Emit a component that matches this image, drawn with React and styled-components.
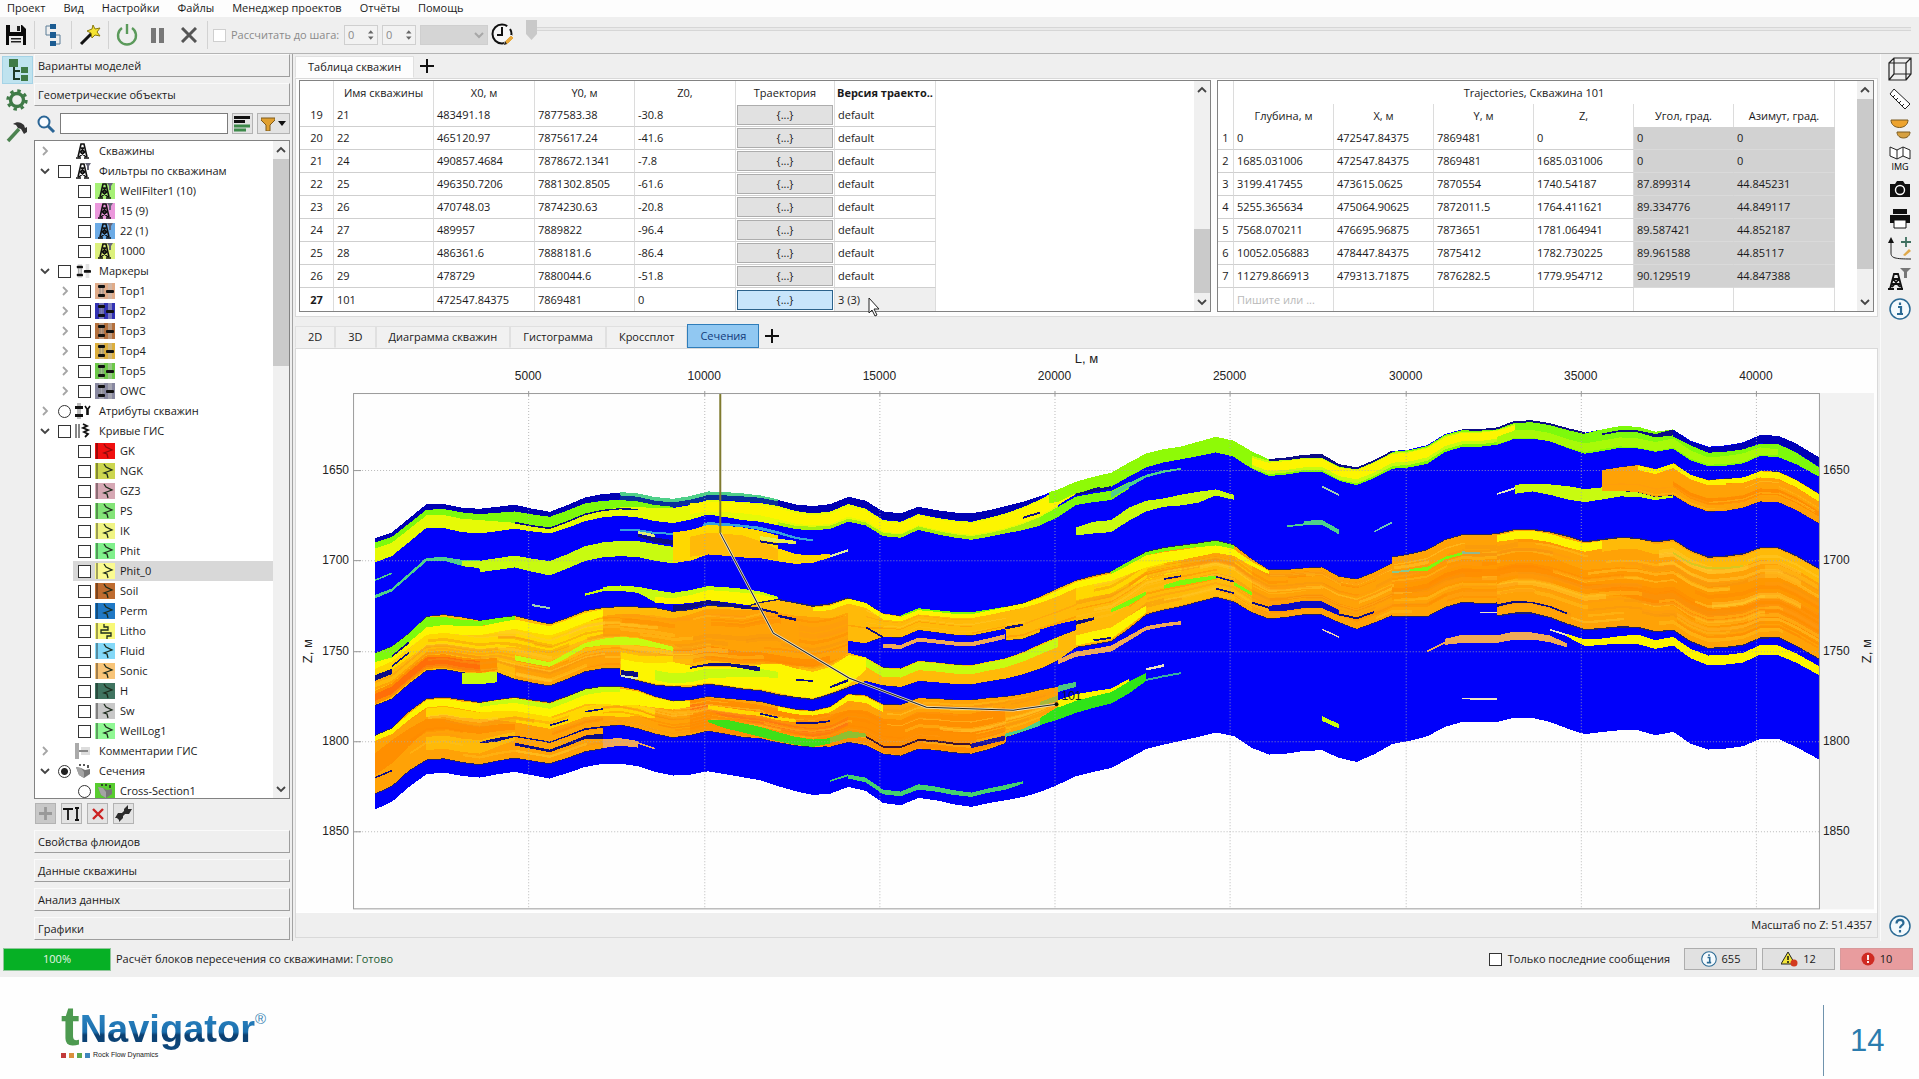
import React from 'react';
import styled, { createGlobalStyle } from 'styled-components';

const GlobalStyle = createGlobalStyle`
  *, *::before, *::after {
    box-sizing: border-box;
  }

  body {
    margin: 0;
    background: #fefefe;
    color: #1a1a1a;
    font-family: 'Open Sans', 'Noto Sans', sans-serif;
    font-size: 11px;
    line-height: 16px;
  }

  button, input, select {
    font: inherit;
    color: inherit;
    margin: 0;
    padding: 0;
  }
`;

const MenuBar = styled.nav`
  display: flex;
  gap: 18px;
  height: 17px;
  padding: 0 7px;
  background: #fdfdfd;

  a {
    color: #1a1a1a;
    text-decoration: none;
  }
`;

const Toolbar = styled.div`
  display: flex;
  align-items: center;
  height: 37px;
  padding-left: 3px;
  background: #efefef;
  border-bottom: 1px solid #b4b4b4;
`;

const ToolButton = styled.button`
  display: flex;
  flex: none;
  align-items: center;
  justify-content: center;
  width: ${(p) => (p.$wide ? 36 : 26)}px;
  height: 28px;
  border: 0;
  background: transparent;
`;

const Separator = styled.span`
  width: 1px;
  height: 28px;
  margin: 0 5px;
  background: #d2d2d2;
`;

const Check = styled.input`
  appearance: none;
  flex: none;
  width: 13px;
  height: 13px;
  border: 1px solid ${(p) => (p.disabled ? '#cfcfcf' : '#333')};
  border-radius: ${(p) => (p.type === 'radio' ? '50%' : '0')};
  background: #fff;

  &[type='radio']:checked {
    background: radial-gradient(circle, #222 0 3px, #fff 4px);
  }
`;

const StepLabel = styled.label`
  display: flex;
  flex: none;
  align-items: center;
  gap: 5px;
  width: 131px;
  color: #8a8a8a;
  white-space: nowrap;
`;

const Spin = styled.span`
  display: flex;
  flex: none;
  align-items: center;
  width: 34px;
  height: 20px;
  margin-right: 4px;
  padding: 0 3px;
  border: 1px solid #cfcfcf;
  background: #f2f2f2;

  input {
    width: 100%;
    min-width: 0;
    border: 0;
    background: transparent;
    color: #8a8a8a;
  }
`;

const Combo = styled.select`
  flex: none;
  width: 68px;
  height: 20px;
  margin-right: 2px;
  border: 1px solid #c2c2c2;
  background: #cbcbcb;
  color: #8a8a8a;
`;

const StepSlider = styled.input`
  appearance: none;
  flex: 1;
  height: 20px;
  margin: 0 8px 10px 10px;
  background: linear-gradient(#d6d6d6 1px, #e9e9e9 1px 3px, #d6d6d6 3px) 0 7px / 100% 4px no-repeat;

  &::-webkit-slider-thumb {
    appearance: none;
    width: 11px;
    height: 20px;
    background: #c9c9c9;
    clip-path: polygon(0 0, 100% 0, 100% 70%, 50% 100%, 0 70%);
  }
`;

const Workspace = styled.div`
  display: grid;
  grid-template-columns: 34px 256px minmax(0, 1fr) 39px;
  background: #efefef;
`;

const ModeStrip = styled.div`
  display: flex;
  flex-direction: column;
  align-items: center;
  padding-top: 2px;
`;

const ModeButton = styled.button`
  display: flex;
  align-items: center;
  justify-content: center;
  width: 31px;
  height: ${(p) => (p.$active ? '28px' : '32px')};
  border: 1px solid ${(p) => (p.$active ? '#a5d3e6' : 'transparent')};
  background: ${(p) => (p.$active ? '#bfe3ef' : 'transparent')};
`;

const Sidebar = styled.aside`
  display: flex;
  flex-direction: column;
`;

const SectionButton = styled.button`
  flex: none;
  height: 23px;
  margin-bottom: 6px;
  padding: 0 3px;
  border: 1px solid #fafafa;
  border-right-color: #9d9d9d;
  border-bottom-color: #9d9d9d;
  background: #efefef;
  text-align: left;

  &:last-child {
    margin-bottom: 1px;
  }
`;

const SearchRow = styled.div`
  display: flex;
  align-items: center;
  gap: 4px;
  height: 23px;
  margin-bottom: 5px;
  padding-left: 2px;

  input {
    flex: 1;
    min-width: 0;
    height: 21px;
    border: 1px solid #7c7c7c;
    background: #fff;
  }
`;

const SquareButton = styled.button`
  display: flex;
  align-items: center;
  justify-content: center;
  gap: 3px;
  width: ${(p) => p.$width || 21}px;
  height: 21px;
  border: 1px solid #b3b3b3;
  background: ${(p) => (p.disabled ? '#c8c8c8' : '#e3e3e3')};
`;

const TreeBox = styled.div`
  display: flex;
  flex: 1 1 0;
  min-height: 0;
  overflow: hidden;
  border: 1px solid #828282;
  background: #fff;
`;

const TreeList = styled.ul`
  flex: 1;
  margin: 0;
  padding: 0;
  list-style: none;
`;

const TreeRow = styled.li`
  display: flex;
  align-items: center;
  height: 20px;
  padding-left: ${(p) => (p.$level ? 22 : 2)}px;
  white-space: nowrap;

  label {
    display: flex;
    flex: 1;
    align-items: center;
    height: 20px;
    padding-left: 5px;
    gap: 4px;
    background: ${(p) => (p.$selected ? '#d8d8d8' : 'transparent')};
  }

  label > svg {
    flex: none;
    margin-right: ${(p) => (p.$level ? 1 : 4)}px;
  }
`;

const Chevron = styled.span`
  display: flex;
  justify-content: center;
  width: 16px;
`;

const CheckSpace = styled.span`
  width: 13px;
`;

const ScrollTrack = styled.div`
  display: flex;
  flex: none;
  flex-direction: column;
  align-items: center;
  justify-content: space-between;
  width: 16px;
  padding: 4px 0;
  background: #f0f0f0;
`;

const ScrollThumb = styled.span`
  width: 16px;
  height: ${(p) => p.$size}px;
  margin-top: ${(p) => (p.$end ? 'auto' : '4px')};
  margin-bottom: ${(p) => (p.$end ? '4px' : 'auto')};
  background: #cacaca;
`;

const TreeActions = styled.div`
  display: flex;
  gap: 5px;
  padding: 4px 1px 6px;
`;

const Main = styled.main`
  min-width: 0;
  margin-left: 2px;
  padding: 0 2px;
  border-left: 1px solid #a3a3a3;
`;

const TabBar = styled.div`
  display: flex;
  align-items: flex-end;
  height: 24px;
`;

const AddTab = styled.button`
  display: flex;
  align-items: center;
  justify-content: center;
  width: 26px;
  height: 24px;
  border: 0;
  background: transparent;
`;

const Tab = styled.button`
  height: ${(p) => (p.$accent ? 24 : 22)}px;
  padding: 0 12px;
  border: 1px solid ${(p) => (p.$accent ? '#2f7dba' : '#e0e0e0')};
  border-bottom-color: ${(p) => (p.$accent ? '#2f7dba' : 'transparent')};
  background: ${(p) => (p.$accent ? '#91c8f2' : p.$open ? '#fdfdfd' : '#f1f1f1')};
  color: ${(p) => (p.$accent ? '#123a7a' : '#1a1a1a')};
`;

const TablesPanel = styled.section`
  display: flex;
  gap: 6px;
  margin-bottom: 7px;
  padding: 1px 3px 4px;
  border: 1px solid #d9d9d9;
  background: #fdfdfd;
`;

const TableFrame = styled.div`
  display: flex;
  flex: ${(p) => (p.$grow ? '1 1 0' : '0 0 auto')};
  justify-content: space-between;
  gap: ${(p) => (p.$grow ? 0 : 22)}px;
  min-width: 0;
  border: 1px solid #828282;
  background: #fff;
`;

const DataTable = styled.table`
  flex: none;
  width: ${(p) => p.$width}px;
  table-layout: fixed;
  border-spacing: 0;

  th, td {
    height: 23px;
    padding: 0 3px;
    border-right: 1px solid #dcdcdc;
    text-align: left;
    white-space: nowrap;
    font-weight: 400;
  }

  thead th {
    padding: 0;
    text-align: center;
  }

  tbody th {
    padding: 0;
    text-align: center;
  }

  tbody th, tbody td {
    border-bottom: 1px solid #cfcfcf;
  }

  tbody tr:last-child > * {
    border-bottom: 0;
  }
`;

const ClippedHead = styled.div`
  display: flex;
  justify-content: center;
  overflow: hidden;
  font-weight: 700;
`;

const ReadOnlyCell = styled.td`
  && {
    background: #d2d2d2;
    border-color: #d2d2d2;
    border-bottom-color: #dadada;
  }
`;

const HintCell = styled.td`
  color: #b9b9b9;
`;

const ButtonCell = styled.td`
  && {
    padding: 1px;
  }
`;

const CellButton = styled.button`
  display: block;
  width: 100%;
  height: 20px;
  border: 1px solid ${(p) => (p.$active ? '#2c628b' : '#adadad')};
  background: ${(p) => (p.$active ? '#c8e5fb' : '#e1e1e1')};
`;

const CurrentCell = styled.td`
  position: relative;
  background: #efefef;
`;

const Pointer = styled.svg`
  position: absolute;
  left: 33px;
  top: 9px;
`;

const ChartPanel = styled.section`
  margin-bottom: 3px;
  border: 1px solid #d9d9d9;
  background: #fefefe;

  svg {
    display: block;
    width: 100%;
    height: auto;
  }
`;

const ScaleLine = styled.p`
  margin: 0;
  padding: 4px 5px;
  border-top: 1px solid #fff;
  background: #efefef;
  text-align: right;
`;

const ViewStrip = styled.div`
  display: flex;
  flex-direction: column;
  align-items: center;
  border-left: 1px solid #fafafa;
`;

const ViewButton = styled.button`
  display: flex;
  align-items: center;
  justify-content: center;
  width: 30px;
  height: 30px;
  border: 0;
  background: transparent;

  &:last-child {
    margin-top: auto;
  }
`;

const StatusBar = styled.div`
  display: flex;
  align-items: center;
  gap: 5px;
  height: 36px;
  padding: 0 6px 0 3px;
  background: #efefef;
`;

const Progress = styled.span`
  width: 108px;
  height: 23px;
  border: 1px solid #8fc79a;
  background: #06b025;
  color: #e6f6e8;
  line-height: 20px;
  text-align: center;
`;

const StatusText = styled.span`
  margin-right: auto;

  b {
    color: #1d5c33;
    font-weight: 400;
  }
`;

const LastOnly = styled.label`
  display: flex;
  align-items: center;
  gap: 6px;
  margin-right: 9px;
`;

const CountButton = styled.button`
  display: flex;
  align-items: center;
  justify-content: center;
  gap: 5px;
  width: 73px;
  height: 22px;
  border: 1px solid ${(p) => (p.$alert ? '#d89a9c' : '#adadad')};
  background: ${(p) => (p.$alert ? '#e89c9e' : '#e1e1e1')};
`;

const SlideFooter = styled.footer`
  display: flex;
  align-items: flex-start;
  justify-content: space-between;
  padding: 22px 36px 0 61px;
`;

const Logo = styled.div`
  display: grid;
  grid-template-columns: auto auto auto;
  align-items: start;
  font-family: 'Liberation Sans Narrow', 'Liberation Sans', sans-serif;
`;

const LogoMark = styled.span`
  color: #4d9a50;
  font-size: 56px;
  font-weight: 700;
  line-height: 54px;
`;

const LogoName = styled.span`
  background: linear-gradient(#2b83c0 25%, #1b6fae 55%, #0b3f70 60%, #0d4a80 90%);
  background-clip: text;
  color: transparent;
  font-size: 38px;
  font-weight: 700;
  line-height: 60px;
`;

const LogoSign = styled.span`
  padding-top: 10px;
  color: #3d86b5;
  font-size: 15px;
  line-height: 20px;
`;

const LogoTag = styled.span`
  display: flex;
  grid-column: 1 / 4;
  align-items: center;
  gap: 3px;
  margin-top: -8px;
  color: #222;
  font-family: 'Liberation Sans', sans-serif;
  font-size: 7px;
  line-height: 8px;
`;

const Swatch = styled.i`
  width: 5px;
  height: 5px;
  background: ${(p) => p.$color};
`;

const SlideNumber = styled.div`
  width: 60px;
  height: 71px;
  margin-top: 6px;
  padding-left: 26px;
  border-left: 1px solid #6f93ad;
  color: #2b7cae;
  font-family: 'Liberation Sans', sans-serif;
  font-size: 31px;
  line-height: 71px;
`;

/* ---------- icons ---------- */

const DerrickIcon = ({ color, funnel }) => (
  <svg width={color ? 20 : 16} height="16" viewBox={color ? '-1 0 20 16' : '1 0 16 16'}>
    {color && <rect x="-1" width="20" height="16" fill={color} />}
    <path d="M4 14L7 1h3l3 13M2 15h5M10 15h5" fill="none" stroke="#111" strokeWidth="1.600" />
    <path d="M7 5h3M6 9h5M7 5l4 4M10 5L6 9M6 9l6 5M11 9l-6 5" fill="none" stroke="#111" strokeWidth="1.300" />
    {funnel && <path d="M11 0h6l-2 3v4h-2V3z" fill="#667" />}
  </svg>
);

const MarkerIcon = ({ color }) => (
  <svg width={color ? 20 : 16} height="16" viewBox={color ? '0 0 20 16' : '1 0 18 16'}>
    {color && <rect width="20" height="16" fill={color} />}
    <path d="M4 0h5v16H4zM13 0h4v16h-4z" fill="#c4c4c4" opacity=".5" />
    <rect x="3" y="2" width="7" height="3" rx="1" fill="#111" />
    <rect x="3" y="11" width="7" height="3" rx="1" fill="#111" />
    <rect x="11" y="7" width="8" height="3" rx="1" fill="#111" />
    <path d="M5 5v6M8 5v6" stroke="#444" strokeOpacity=".4" />
  </svg>
);

const AttributeIcon = () => (
  <svg width="16" height="16" viewBox="0 0 16 16">
    <path d="M2 0h4v16H2z" fill="#bbb" />
    <path d="M0 3h8v3H0zM0 11h8v3H0z" fill="#111" />
    <path d="M10 3l2 3v6M15 3l-2 3v6" stroke="#111" strokeWidth="1.6" fill="none" />
  </svg>
);

const CurvesIcon = () => (
  <svg width="16" height="16" viewBox="0 0 16 16">
    <path d="M1 1v14M4 1v14" stroke="#888" strokeWidth="2" />
    <path d="M8 1l4 2-4 2 5 2-4 2 4 2-3 3" stroke="#111" strokeWidth="1.8" fill="none" />
  </svg>
);

const LogIcon = ({ color, steps }) => (
  <svg width="20" height="16" viewBox="0 0 20 16">
    <rect width="20" height="16" fill={color} />
    <path d="M2 0v16" stroke="#000" strokeOpacity=".35" strokeWidth="2" />
    <path
      d={steps ? 'M9 1v3h4v3H6v3h10v3h-4v3' : 'M9 1l2 3 6 3-8 3 3 1 1 4'}
      stroke={color === '#f01010' ? '#8d0b0b' : '#1c2b1c'}
      strokeWidth="1.3"
      fill="none"
    />
  </svg>
);

const CommentIcon = () => (
  <svg width="16" height="16" viewBox="0 0 16 16">
    <path d="M0 0h4v16H0z" fill="#aaa" />
    <path d="M6 4h9v8H6z" fill="#ddd" />
    <path d="M4 8h9" stroke="#888" strokeWidth="2" />
  </svg>
);

const SectionIcon = ({ color }) => (
  <svg width={color ? 20 : 16} height="16" viewBox={color ? '-2 0 20 16' : '0 0 16 16'}>
    {color && <rect x="-2" width="20" height="16" fill={color} />}
    <path d="M1 4l5 1 4 2 5-1v5l-6 4-5-3z" fill="#777" />
    <path d="M1 4l5 1 3 4v6l-5-3z" fill="#a4a4a4" />
    <path d="M5 1v2M9 1v2M13 2v3" stroke="#222" strokeWidth="1.5" />
  </svg>
);

const ChevronIcon = ({ dir, color = '#444', size = 10 }) => {
  const shapes = { right: 'M3 1l4 4-4 4', down: 'M1 3l4 4 4-4', up: 'M1 7l4-4 4 4' };
  return (
    <svg width={size} height={size} viewBox="0 0 10 10">
      <path d={shapes[dir]} fill="none" stroke={color} strokeWidth="1.8" />
    </svg>
  );
};

const PlusIcon = () => (
  <svg width="14" height="14" viewBox="0 0 14 14">
    <path d="M7 0v14M0 7h14" stroke="#111" strokeWidth="2" />
  </svg>
);

const InfoIcon = ({ size = 22, mark = 'i' }) => (
  <svg width={size} height={size} viewBox="0 0 22 22">
    <circle cx="11" cy="11" r="10" fill="#f4fafd" stroke="#2b6a94" strokeWidth="1.5" />
    {mark === 'i' ? (
      <path d="M9 9h3v7M8 16h6M11 4.5v2.4" stroke="#2b6a94" strokeWidth="2.2" fill="none" />
    ) : (
      <path d="M7.500 8.500c0-5 7-4.500 7-.5 0 2.500-3.500 2.500-3.500 5.200M11 15v2.400" stroke="#2b6a94" strokeWidth="2.200" fill="none" />
    )}
  </svg>
);

const SaveIcon = () => (
  <svg width="22" height="22" viewBox="0 0 22 22">
    <path d="M1 1h16l4 4v16H1z" fill="#0a0a0a" />
    <path d="M5 1h11v7H5zM4 12h14v9H4z" fill="#ececec" />
    <path d="M12 2h3v5h-3zM6 14h10v1.500H6zM6 17h10v1.500H6z" fill="#222" />
  </svg>
);

const FlowIcon = () => (
  <svg width="18" height="24" viewBox="0 0 18 24">
    <path d="M9 3H2v9h6M9 12h7v9h-6" fill="none" stroke="#5b7c97" />
    <path d="M6 1h6v5H6zM6 9h6v6H6zM6 18h6v5H6z" fill="#1c5c92" />
  </svg>
);

const WandIcon = () => (
  <svg width="22" height="22" viewBox="0 0 22 22">
    <path d="M2 20L13 9" stroke="#111" strokeWidth="3" />
    <path d="M14 1l2 4 5-1-3 4 3 4-5-1-3 3-1-5-4-2 5-2z" fill="#f6e431" stroke="#8a7a10" />
  </svg>
);

const PowerIcon = () => (
  <svg width="22" height="22" viewBox="0 0 22 22">
    <path d="M6 4a9 9 0 1 0 10 0" fill="none" stroke="#5b9a5b" strokeWidth="2.4" />
    <path d="M11 0v10" stroke="#5b9a5b" strokeWidth="2.4" />
  </svg>
);

const ClockIcon = () => (
  <svg width="24" height="24" viewBox="0 0 24 24">
    <circle cx="11" cy="11" r="9.500" fill="#f7f7f7" stroke="#111" strokeWidth="2" strokeDasharray="50 4" />
    <path d="M11 4v8H6" fill="none" stroke="#111" strokeWidth="2" />
    <path d="M13 22l1-4 6-6 3 3-6 6z" fill="#e8a83a" stroke="#efefef" />
    <path d="M13 22l1-4 2 3z" fill="#222" />
  </svg>
);

const TreeModeIcon = () => (
  <svg width="24" height="24" viewBox="0 0 24 24">
    <path d="M9 9v12h6M9 13h6" fill="none" stroke="#1f3a26" strokeWidth="2" />
    <path d="M4 1h9v8H4zM16 9h7v6h-7zM16 17h7v6h-7z" fill="#3f7a47" />
  </svg>
);

const GearIcon = () => (
  <svg width="22" height="22" viewBox="0 0 22 22">
    <circle cx="11" cy="11" r="6.500" fill="none" stroke="#3f7a47" strokeWidth="3.400" />
    <circle cx="11" cy="11" r="9.200" fill="none" stroke="#3f7a47" strokeWidth="3" strokeDasharray="3.400 3.825" />
  </svg>
);

const HammerIcon = () => (
  <svg width="22" height="22" viewBox="0 0 22 22">
    <path d="M2 20L13 8" stroke="#4c8350" strokeWidth="3.500" />
    <path d="M7 3c4-3 8-2 11 1l1 3 2-1v5l-3 2-3-5-3-1-2-3z" fill="#333" />
  </svg>
);

const SearchIcon = () => (
  <svg width="20" height="20" viewBox="0 0 20 20">
    <circle cx="8" cy="8" r="5.500" fill="#f7fbff" stroke="#2a6596" strokeWidth="2" />
    <path d="M12 12l6 6" stroke="#2a6596" strokeWidth="3" />
  </svg>
);

const SortIcon = () => (
  <svg width="17" height="16" viewBox="0 0 17 16">
    <path d="M0 1.500h16M0 5.500h11" stroke="#111" strokeWidth="3" />
    <path d="M0 10h16M0 14h12" stroke="#3d8a4a" strokeWidth="3" />
  </svg>
);

const FunnelIcon = () => (
  <svg width="14" height="14" viewBox="0 0 14 14">
    <path d="M0 1h14v2L9 8v6H5V8L0 3z" fill="#e0a030" stroke="#7d5a1c" />
  </svg>
);

const WrenchIcon = () => (
  <svg width="17" height="17" viewBox="0 0 17 17">
    <path d="M3 14l9-9" stroke="#2c2c2c" strokeWidth="3" />
    <path d="M9 7V4l4-4v4h4l-3 5h-4zM8 10v3l-4 4v-4H0l3-5h4z" fill="#2c2c2c" />
  </svg>
);

const VIEW_ICONS = [
  ['Вид', <svg width="24" height="24" viewBox="0 0 24 24"><path d="M1 6h17v17H1zM1 6l5-5h17v16l-5 6M18 6l5-5M6 1v16h17M6 17l-5 6" fill="none" stroke="#222" strokeWidth="1.2" /></svg>],
  ['Линейка', <svg width="22" height="22" viewBox="0 0 22 22"><path d="M5 1l16 15-5 5L1 6z" fill="#fff" stroke="#222" /><path d="M4 9l2-2M7 12l2-2M10 15l2-2M13 18l2-2" stroke="#222" /></svg>],
  ['Чаши', <svg width="22" height="22" viewBox="0 0 22 22"><path d="M2 2h17c0 10-17 10-17 0z" fill="#eda32e" stroke="#7a5a20" /><path d="M8 14h13c0 8-13 8-13 0z" fill="#d6a040" stroke="#7a5a20" /></svg>],
  ['Изображение', <svg width="24" height="26" viewBox="0 0 24 26"><path d="M2 1l7 3 6-3 7 3v9l-7-3-6 3-7-3zM9 4v9M15 1v9" fill="#fff" stroke="#222" /><text x="12" y="24" textAnchor="middle" fontSize="9">IMG</text></svg>],
  ['Снимок', <svg width="22" height="18" viewBox="0 0 22 18"><path d="M1 4h5l2-3h6l2 3h5v13H1z" fill="#111" /><circle cx="11" cy="10" r="4.500" fill="none" stroke="#fff" strokeWidth="1.400" /></svg>],
  ['Печать', <svg width="22" height="20" viewBox="0 0 22 20"><path d="M4 0h14v5H4zM1 6h20v8H1z" fill="#111" /><path d="M5 11h12v8H5z" fill="#fff" stroke="#111" /></svg>],
  ['Траектория', <svg width="24" height="24" viewBox="0 0 24 24"><path d="M3 4v12c0 5 4 6 20 6" fill="none" stroke="#222" /><path d="M0 6l3-6 3 6z" fill="#111" /><path d="M18 0v10M13 5h10" stroke="#3f7060" strokeWidth="1.800" /><path d="M15 18l6-6 2 2-6 5z" fill="#e0a94a" /></svg>],
  ['Фильтр', <svg width="24" height="24" viewBox="0 0 24 24"><path d="M2 22L6 7h4l4 15M0 22h6M9 22h6M5 12h6M4 17h8M5 12l7 8M11 12l-7 8" fill="none" stroke="#111" strokeWidth="1.800" /><path d="M12 1h11l-4 4v6h-3V5z" fill="#777" /></svg>],
  ['Информация', <InfoIcon />],
  ['Помощь', <InfoIcon mark="?" />],
];

/* ---------- cross-section ---------- */

// x, top and bottom of the section, in thirds of a pixel from the plot origin
const HORIZON = [
  [107, 505, 1318], [158, 487, 1295], [210, 445, 1250], [262, 402, 1212], [315, 402, 1207],
  [368, 413, 1217], [422, 416, 1222], [475, 410, 1212], [527, 404, 1205], [580, 416, 1215],
  [632, 425, 1225], [685, 405, 1208], [738, 382, 1190], [790, 372, 1181], [843, 368, 1180],
  [896, 372, 1188], [948, 383, 1205], [1001, 388, 1216], [1053, 380, 1213], [1106, 366, 1203],
  [1158, 368, 1212], [1211, 372, 1221], [1263, 378, 1230], [1317, 390, 1248], [1369, 403, 1263],
  [1421, 408, 1274], [1473, 402, 1270], [1527, 380, 1250], [1579, 392, 1262], [1631, 424, 1298],
  [1684, 430, 1305], [1737, 410, 1283], [1790, 420, 1290], [1843, 427, 1302], [1896, 430, 1310],
  [1949, 420, 1298], [1998, 408, 1290], [2051, 395, 1280], [2103, 378, 1265], [2156, 358, 1243],
  [2209, 335, 1218], [2262, 320, 1205], [2315, 308, 1193], [2368, 278, 1165], [2420, 250, 1136],
  [2473, 237, 1123], [2523, 230, 1112], [2576, 215, 1100], [2629, 200, 1087], [2682, 212, 1097],
  [2737, 244, 1133], [2788, 268, 1153], [2842, 262, 1150], [2893, 254, 1142], [2947, 253, 1140],
  [2998, 283, 1163], [3051, 294, 1175], [3104, 272, 1152], [3158, 243, 1121], [3210, 238, 1112],
  [3263, 225, 1098], [3316, 192, 1070], [3368, 178, 1055], [3420, 178, 1056], [3473, 172, 1055],
  [3525, 153, 1042], [3578, 152, 1043], [3630, 160, 1055], [3683, 176, 1075], [3735, 188, 1092],
  [3788, 178, 1085], [3841, 168, 1080], [3894, 170, 1080], [3947, 185, 1095], [4000, 178, 1085],
  [4052, 212, 1120], [4105, 230, 1138], [4157, 226, 1135], [4210, 217, 1128], [4260, 195, 1106],
  [4315, 197, 1106], [4368, 220, 1130], [4438, 262, 1168],
];

const sample = (rows, x) => {
  let i = 0;
  while (i < rows.length - 2 && rows[i + 1][0] < x) i += 1;
  const a = rows[i];
  const b = rows[i + 1];
  const t = (x - a[0]) / (b[0] - a[0]);
  return a.map((v, k) => v + (b[k] - v) * t);
};

// Depths are interpolated as a share of the section so that layers follow its folds.
const ribbon = (keys, from = 0, to = 1, x1 = keys[0][0], x2 = keys[keys.length - 1][0]) => {
  const shares = keys.map(([x, y1, y2]) => {
    const [, top, bottom] = sample(HORIZON, x);
    return [x, (y1 - top) / (bottom - top), (y2 - top) / (bottom - top)];
  });
  const xs = [...HORIZON, ...keys]
    .map((row) => row[0])
    .filter((x) => x > x1 && x < x2)
    .concat([x1, x2])
    .sort((a, b) => a - b);
  const edge = (share) => xs.map((x) => {
    const [, top, bottom] = sample(HORIZON, x);
    const [, s1, s2] = sample(shares, x);
    const y = top + (bottom - top) * (s1 + (s2 - s1) * share);
    return `${Math.round(x)},${Math.round(y)}`;
  });
  return [...edge(from), ...edge(to).reverse()].join(' ');
};

const BLUE = '#0000fa';
const NAVY = '#0c0c86';
const GREEN = '#7dfa0c';
const LIME = '#c8fb10';
const YELLOW = '#fdf500';
const GOLD = '#ffd800';
const AMBER = '#ffba08';
const ORANGE = '#ffa206';
const DEEP = '#ff8f00';
const TAN = '#efaa58';
const TEAL = '#4fd08a';

const UPPER = [
  [107, 850, 1005], [158, 830, 985], [210, 790, 940], [262, 740, 900], [368, 742, 906], [422, 752, 912],
  [475, 746, 906], [527, 738, 926], [632, 763, 946], [738, 723, 903], [790, 714, 893], [843, 711, 892],
  [844, 711, 916], [896, 712, 930], [948, 714, 943], [1001, 725, 948], [1053, 720, 950], [1106, 708, 940],
  [1211, 714, 955], [1317, 690, 972], [1369, 700, 980], [1421, 710, 986], [1473, 703, 970], [1527, 685, 950],
];
const MIDDLE = [
  [1527, 685, 815], [1579, 700, 818], [1631, 730, 800], [1684, 738, 802], [1737, 715, 779], [1896, 727, 796],
  [1998, 710, 775], [2000, 710, 810], [2051, 700, 805], [2103, 680, 785], [2156, 655, 770], [2209, 632, 752],
];
const MIDDLE_LOW = [
  [1527, 848, 950], [1579, 862, 932], [1631, 892, 945], [1684, 895, 950], [1737, 872, 932], [1896, 885, 942],
  [1998, 865, 925], [2103, 822, 895], [2156, 800, 870], [2209, 780, 832],
];
const EAST = [
  [2209, 632, 830], [2262, 618, 822], [2315, 606, 812], [2368, 577, 775], [2420, 546, 732], [2523, 527, 708],
  [2629, 512, 680], [2682, 525, 693], [2737, 568, 726], [2788, 600, 745], [2893, 595, 732], [2947, 592, 733],
  [2998, 620, 756], [3051, 628, 776], [3104, 607, 757], [3157, 580, 735], [3158, 562, 737], [3210, 553, 738],
  [3263, 540, 738], [3316, 510, 710], [3368, 495, 695], [3472, 492, 697], [3473, 492, 735], [3525, 480, 727],
  [3578, 480, 727], [3630, 487, 740], [3683, 500, 760], [3735, 517, 777], [3788, 510, 773], [3894, 507, 770],
  [3947, 517, 783], [4000, 510, 778], [4052, 543, 812], [4105, 563, 833], [4210, 553, 823], [4260, 535, 802],
  [4315, 535, 800], [4438, 598, 865],
];
const LOWER = [
  [107, 1097, 1270], [158, 1075, 1247], [210, 1025, 1200], [262, 987, 1168], [368, 990, 1175], [422, 998, 1182],
  [527, 983, 1162], [632, 998, 1179], [738, 958, 1143], [790, 950, 1134], [791, 950, 1068], [843, 950, 1063],
  [896, 960, 1074], [948, 980, 1090], [1001, 993, 1101], [1106, 980, 1081], [1211, 990, 1100], [1317, 1008, 1116],
  [1421, 1022, 1130], [1473, 1010, 1128], [1527, 972, 1115], [1579, 976, 1124], [1631, 1003, 1150],
  [1684, 1005, 1156], [1737, 984, 1135], [1896, 990, 1150], [1949, 984, 1136], [1998, 980, 1118], [2000, 980, 1100],
  [2103, 960, 1062], [2156, 950, 1030],
];
const NORTH_EAST = [
  [3788, 300, 362], [3841, 292, 362], [3894, 285, 366], [3947, 297, 380], [3999, 290, 375], [4000, 278, 375],
  [4052, 315, 406], [4105, 330, 424], [4157, 326, 422], [4210, 326, 412], [4260, 303, 394], [4315, 305, 396],
  [4438, 372, 460],
];

const LAYERS = [
  [BLUE, [[107, 505, 1318], [4438, 262, 1168]]],
  // caprock
  ['#0000b4', [[107, 505, 517], [262, 402, 419], [368, 413, 427], [527, 404, 424], [632, 425, 440], [738, 382, 400], [843, 368, 388]]],
  [TEAL, [[843, 366, 378], [1001, 386, 398], [1106, 364, 376], [1317, 388, 394]]],
  ['#0a2f9c', [[843, 376, 390], [1001, 397, 411], [1106, 375, 389], [1317, 394, 408]]],
  ['#0000b4', [[1317, 390, 408], [1421, 408, 430], [1527, 380, 402], [1631, 424, 448], [1684, 430, 453], [1737, 410, 431], [1896, 430, 454], [1998, 408, 430], [2103, 378, 388]]],
  [GREEN, [[107, 517, 548], [262, 419, 440], [368, 427, 448], [527, 424, 460], [632, 440, 476], [738, 400, 436], [843, 390, 414], [1001, 410, 420]]],
  ['#e6fa06', [[107, 535, 577], [262, 436, 473], [368, 446, 486], [422, 450, 490], [527, 458, 476], [632, 474, 490], [738, 434, 453], [843, 412, 437], [1001, 414, 459], [1106, 390, 433], [1211, 396, 450], [1317, 408, 466], [1421, 430, 481], [1527, 402, 455], [1631, 450, 498], [1684, 455, 503], [1737, 432, 479], [1896, 455, 509], [1998, 430, 490], [2103, 388, 466], [2156, 358, 440]]],
  [YELLOW, [[1053, 400, 432], [1106, 396, 424], [1317, 415, 448], [1421, 436, 466], [1527, 410, 440], [1631, 455, 484], [1684, 460, 490], [1737, 436, 466], [1896, 460, 494], [1998, 434, 474], [2103, 392, 436], [2209, 345, 372]]],
  ['#a4f010', [[1317, 456, 466], [1421, 470, 481], [1527, 446, 455], [1631, 488, 498], [1684, 493, 503], [1737, 469, 479], [1896, 498, 509], [1998, 478, 490], [2103, 440, 466]]],
  [GREEN, [[2103, 440, 466], [2156, 410, 440], [2209, 380, 405], [2315, 362, 390], [2368, 336, 356]]],
  ['#8efa06', [[2130, 366, 400], [2156, 358, 395], [2209, 335, 370], [2315, 308, 350], [2368, 278, 320], [2420, 250, 292], [2523, 230, 268], [2629, 200, 247], [2682, 212, 260], [2737, 244, 296], [2788, 268, 318]]],
  [TEAL, [[2315, 366, 384], [2368, 338, 352], [2420, 314, 322], [2523, 294, 299]]],
  [NAVY, [[2209, 370, 377], [2315, 348, 356]]],
  [GREEN, [[2737, 244, 296], [2788, 270, 318], [2893, 262, 305], [2947, 262, 305], [2998, 288, 332], [3051, 297, 345], [3158, 245, 296], [3263, 228, 281], [3316, 194, 246], [3368, 180, 230], [3473, 178, 224], [3525, 158, 206], [3578, 156, 206], [3630, 164, 213], [3735, 190, 251], [3788, 178, 243], [3894, 170, 235], [3947, 185, 245], [4000, 178, 236], [4052, 225, 271], [4105, 248, 289], [4210, 237, 280], [4260, 222, 258], [4315, 222, 261], [4438, 292, 320]]],
  [LIME, [[2737, 258, 294], [2788, 272, 312], [2893, 264, 300], [2947, 264, 300], [3051, 298, 340], [3158, 248, 288], [3263, 232, 272], [3316, 198, 238], [3473, 180, 216], [3525, 162, 194]]],
  [YELLOW, [[2737, 264, 284], [2788, 278, 304], [2893, 266, 292], [2947, 266, 290], [3051, 300, 328], [3158, 252, 278], [3263, 234, 262], [3316, 202, 228], [3473, 182, 206], [3525, 166, 184]]],
  ['#a8fa08', [[3473, 200, 222], [3578, 180, 204], [3735, 220, 246], [3894, 205, 232], [4000, 205, 232], [4105, 262, 284], [4210, 250, 276], [4315, 238, 256]]],
  [NAVY, [[2788, 267, 273], [2893, 254, 264], [2947, 252, 264], [2998, 282, 290], [3051, 292, 298], [3158, 241, 247]]],
  [NAVY, [[3368, 176, 181], [3473, 172, 178], [3525, 152, 158], [3578, 151, 157], [3735, 186, 192]]],
  [NAVY, [[3788, 190, 195], [3894, 181, 187], [3947, 192, 202], [4000, 178, 196]]],
  ['#0000b8', [[4000, 178, 200], [4052, 214, 226], [4105, 232, 248], [4210, 218, 238], [4260, 195, 220], [4315, 197, 222], [4438, 262, 290]]],
  [NAVY, [[2051, 440, 446], [2103, 424, 430]]],
  [NAVY, [[2209, 372, 377], [2280, 350, 362]]],
  [NAVY, [[527, 455, 460], [632, 472, 477], [738, 430, 435], [843, 414, 418], [896, 416, 420]]],
  // second pay
  [TEAL, [[107, 675, 685], [158, 655, 664], [262, 563, 574], [315, 561, 572], [422, 570, 594]]],
  [TEAL, [[107, 628, 633], [158, 607, 612]]],
  [LIME, [[368, 574, 588], [421, 572, 594], [422, 572, 606], [527, 556, 592], [632, 573, 616], [738, 528, 572], [843, 512, 558], [948, 522, 572], [1001, 530, 580], [1053, 520, 570]]],
  [GOLD, [[1001, 487, 578], [1053, 480, 572], [1106, 464, 553], [1211, 472, 562], [1263, 482, 564], [1316, 496, 574], [1317, 535, 574], [1369, 552, 581], [1421, 556, 578], [1473, 550, 562]]],
  [AMBER, [[1053, 500, 560], [1106, 488, 553], [1211, 496, 562], [1317, 538, 570]]],
  ['#37a3dc', [[1090, 462, 468], [1106, 456, 465], [1211, 464, 471], [1263, 470, 480], [1317, 484, 492], [1421, 508, 514]]],
  ['#e0efa0', [[1473, 555, 562], [1527, 537, 544]]],
  ['#e0f070', [[896, 480, 490], [948, 494, 502]]],
  ['#37a3dc', [[843, 476, 482], [1001, 488, 494]]],
  [NAVY, [[896, 492, 500], [948, 502, 518], [1001, 510, 524]]],
  ['#e8ee50', [[1263, 498, 510], [1317, 506, 518], [1369, 512, 522]]],
  [NAVY, [[1263, 511, 517], [1317, 520, 526]]],
  [LIME, [[738, 670, 677], [790, 656, 664], [791, 650, 664], [896, 650, 668], [948, 660, 696], [1001, 668, 702], [1053, 660, 692], [1106, 648, 688], [1211, 656, 702], [1263, 664, 712], [1317, 680, 716]]],
  [YELLOW, [[948, 680, 698], [1001, 684, 702], [1106, 660, 690], [1211, 668, 703], [1369, 698, 738]]],
  ['#9fd0b0', [[580, 702, 708], [632, 711, 717]]],
  [LIME, [[2209, 472, 496], [2262, 455, 490], [2315, 450, 486], [2368, 413, 452], [2420, 392, 424], [2473, 385, 410], [2523, 374, 406], [2576, 365, 398], [2629, 358, 376], [2682, 374, 389]]],
  [TEAL, [[2842, 466, 471], [2892, 460, 466], [2893, 452, 464], [2947, 450, 464], [2998, 478, 493]]],
  ['#9fd0b0', [[2947, 347, 352], [2998, 372, 377]]],
  ['#6fc8b8', [[3104, 482, 487], [3158, 453, 460]]],
  ['#e8ecc0', [[3473, 369, 374], [3525, 352, 358]]],
  [LIME, [[3525, 344, 371], [3578, 341, 364], [3630, 343, 374], [3683, 348, 388], [3735, 357, 396], [3788, 352, 388], [3894, 360, 380], [3947, 374, 390], [4000, 370, 382]]],
];

const PAY_ZONES = [
  [AMBER, UPPER],
  [AMBER, MIDDLE],
  [AMBER, MIDDLE_LOW],
  [ORANGE, EAST],
  [ORANGE, NORTH_EAST],
  [ORANGE, LOWER],
];

// Broad shading of the pay zones, under the lamination.
const SHADES = [
  [DEEP, [[107, 962, 1003], [158, 940, 980], [262, 856, 896], [368, 862, 903], [422, 868, 908], [475, 862, 900]]],
  ['#ff6e08', [[107, 972, 992], [262, 862, 890], [422, 872, 902]]],
  [GOLD, [[107, 890, 925], [158, 870, 900], [262, 790, 828], [368, 790, 832], [527, 770, 830], [632, 790, 846], [738, 750, 808], [790, 730, 790]]],
  [ORANGE, [[527, 880, 926], [632, 895, 946], [738, 845, 903], [843, 830, 892]]],
  [ORANGE, [[790, 738, 800], [1001, 745, 822], [1106, 715, 870], [1211, 720, 880], [1317, 728, 880], [1421, 740, 890], [1527, 735, 850]]],
  [DEEP, [[1001, 835, 850], [1106, 826, 850], [1211, 845, 868], [1317, 855, 878], [1421, 868, 888], [1473, 856, 874]]],
  [AMBER, [[2209, 632, 830], [2315, 620, 810], [2420, 570, 728], [2523, 560, 705], [2629, 540, 678], [2737, 585, 724]]],
  [GOLD, [[2209, 650, 690], [2315, 630, 670], [2420, 590, 630], [2523, 570, 605]]],
  ['#ff9800', [[3158, 625, 690], [3263, 600, 680], [3368, 560, 645], [3578, 545, 625], [3735, 600, 670], [3894, 595, 690], [4105, 650, 770], [4260, 610, 760], [4438, 680, 825]]],
  [DEEP, [[3158, 655, 672], [3263, 640, 658], [3368, 595, 620], [3578, 585, 605], [3735, 640, 655], [3894, 655, 690], [4105, 710, 760], [4260, 680, 745], [4438, 730, 805]]],
  [AMBER, [[3788, 512, 545], [4000, 514, 545], [4105, 566, 590], [4260, 538, 570], [4438, 600, 640]]],
  [DEEP, [[4000, 335, 350], [4105, 385, 405], [4260, 355, 375], [4438, 425, 440]]],
  [DEEP, [[107, 1150, 1215], [158, 1110, 1180], [262, 1046, 1080], [368, 1060, 1085], [527, 1060, 1078]]],
  [AMBER, [[262, 1100, 1140], [422, 1110, 1150], [527, 1085, 1110]]],
  [GOLD, [[262, 1008, 1040], [422, 1018, 1046], [527, 1020, 1056], [632, 1040, 1076], [738, 1000, 1040], [843, 1004, 1040], [948, 1015, 1045]]],
  [DEEP, [[1053, 990, 1088], [1158, 990, 1090], [1263, 1004, 1104], [1421, 1030, 1128], [1527, 1020, 1114], [1631, 1045, 1148], [1737, 1024, 1134], [1896, 1030, 1148], [1998, 1010, 1118]]],
  ['#ff7a10', [[1053, 1000, 1020], [1158, 1022, 1040], [1263, 1040, 1062], [1421, 1075, 1100], [1527, 1040, 1066]]],
];

const DETAILS = [
  [GREEN, [[107, 850, 876], [158, 830, 862], [210, 790, 820], [262, 740, 772], [315, 740, 766], [422, 752, 768], [527, 738, 750]]],
  [YELLOW, [[107, 876, 896], [158, 862, 874], [262, 772, 794], [368, 768, 794], [527, 748, 776], [632, 768, 796], [738, 728, 758], [790, 718, 738]]],
  [LIME, [[368, 908, 942], [422, 908, 942], [475, 905, 936]]],
  [LIME, [[527, 855, 870], [632, 876, 890], [738, 818, 832], [843, 800, 826], [948, 816, 832], [1001, 830, 842]]],
  [GOLD, [[844, 846, 870], [896, 856, 880], [1001, 856, 880]]],
  [YELLOW, [[844, 866, 914], [896, 876, 928], [1001, 876, 946], [1106, 890, 938], [1211, 892, 953], [1317, 880, 968], [1421, 905, 984], [1473, 890, 968], [1527, 855, 945], [1579, 862, 900]]],
  [LIME, [[948, 900, 930], [1106, 895, 925], [1317, 905, 925]]],
  [NAVY, [[844, 900, 916], [896, 905, 920]]],
  ['#d8e8c0', [[844, 914, 920], [896, 922, 928]]],
  [NAVY, [[107, 915, 932], [158, 896, 912]]],
  [NAVY, [[158, 856, 862], [210, 813, 820]]],
  [NAVY, [[158, 886, 892], [210, 844, 850]]],
  [NAVY, [[1001, 706, 724], [1106, 690, 702], [1211, 706, 716], [1263, 713, 720], [1317, 726, 732]]],
  [NAVY, [[1317, 734, 741], [1369, 744, 752]]],
  [NAVY, [[1053, 890, 896], [1106, 880, 886], [1158, 878, 886], [1263, 890, 904]]],
  [NAVY, [[1369, 926, 931], [1421, 930, 935]]],
  [NAVY, [[1473, 948, 954], [1527, 926, 934]]],
  [GREEN, [[1684, 736, 744], [1737, 714, 722], [1896, 726, 734], [1998, 710, 718]]],
  [YELLOW, [[1421, 712, 724], [1527, 686, 700], [1631, 732, 748], [1737, 720, 733], [1896, 732, 744], [2103, 684, 698], [2209, 636, 654], [2315, 610, 632], [2420, 556, 592], [2523, 540, 570], [2629, 522, 548], [2737, 575, 588], [2788, 602, 612]]],
  [GREEN, [[2315, 604, 612], [2420, 546, 556], [2523, 527, 536], [2629, 512, 526], [2682, 525, 536]]],
  [BLUE, [[1527, 812, 848], [1579, 820, 862]]],
  [NAVY, [[1579, 768, 774], [1631, 798, 804]]],
  [TAN, [[1631, 820, 834], [1684, 824, 836], [1737, 802, 814], [1896, 816, 829], [1998, 792, 806]]],
  [NAVY, [[1998, 770, 778], [2051, 760, 767]]],
  [LIME, [[1579, 864, 890], [1631, 894, 920], [1684, 897, 922], [1737, 874, 900], [1896, 887, 912], [1998, 867, 892], [2103, 826, 852], [2156, 802, 830]]],
  [BLUE, [[2103, 778, 820], [2156, 762, 800], [2209, 750, 776]]],
  [NAVY, [[2209, 752, 764], [2262, 742, 750]]],
  [YELLOW, [[2209, 796, 826], [2315, 772, 806], [2368, 738, 766], [2420, 706, 728]]],
  [NAVY, [[2262, 808, 813], [2315, 800, 806]]],
  [GREEN, [[2315, 716, 726], [2368, 690, 706], [2420, 664, 674]]],
  [GREEN, [[2473, 645, 656], [2523, 630, 646], [2629, 616, 626]]],
  [GREEN, [[2682, 635, 645], [2737, 666, 676]]],
  [NAVY, [[2473, 624, 629], [2523, 616, 621]]],
  [NAVY, [[2629, 617, 622], [2682, 632, 637]]],
  [NAVY, [[2629, 653, 658], [2682, 666, 671]]],
  [NAVY, [[2737, 694, 700], [2788, 710, 716]]],
  ['#0a0ac8', [[2788, 707, 724], [2893, 692, 714], [2947, 694, 714], [2998, 720, 736]]],
  [NAVY, [[2998, 730, 736], [3051, 741, 747], [3104, 723, 729]]],
  ['#86c890', [[3158, 604, 609], [3210, 598, 604]]],
  [GREEN, [[3210, 597, 604], [3263, 590, 602], [3316, 560, 568], [3368, 546, 554]]],
  ['#90b890', [[3368, 544, 552], [3420, 545, 552]]],
  [YELLOW, [[3473, 496, 515], [3525, 484, 508], [3578, 482, 508], [3735, 520, 545], [3788, 512, 535]]],
  ['#d8c820', [[4000, 546, 552], [4105, 592, 598], [4210, 585, 591]]],
  [NAVY, [[3473, 702, 710], [3525, 692, 698], [3578, 695, 700], [3683, 728, 733]]],
  [YELLOW, [[3894, 286, 300], [3947, 298, 312], [4000, 280, 294], [4105, 332, 346], [4157, 326, 344]]],
  [YELLOW, [[4157, 327, 340], [4260, 304, 322], [4315, 306, 326], [4438, 373, 395]]],
  // water leg stringers
  [TAN, [[3263, 841, 846], [3315, 815, 820], [3316, 806, 824], [3368, 794, 818], [3473, 795, 818], [3525, 784, 808], [3578, 787, 808], [3630, 796, 816], [3683, 820, 832]]],
  ['#efe6c0', [[3368, 982, 987], [3473, 983, 988]]],
  ['#efe6c0', [[3420, 725, 730], [3473, 725, 730]]],
  ['#efe6c0', [[3630, 776, 781], [3683, 792, 798]]],
  [YELLOW, [[3683, 792, 800], [3735, 808, 828], [3788, 805, 824], [3840, 798, 820], [3894, 793, 822], [3947, 810, 836], [4000, 800, 826], [4052, 836, 864], [4105, 856, 885], [4210, 848, 877], [4260, 825, 853], [4315, 826, 855], [4438, 888, 915]]],
  ['#efd0b0', [[2947, 775, 780], [2998, 798, 803]]],
  [LIME, [[2947, 1038, 1052], [2998, 1061, 1075]]],
  [TAN, [[2156, 868, 882], [2209, 844, 860], [2262, 836, 852], [2315, 826, 844], [2420, 768, 780], [2523, 753, 763]]],
  ['#efe6c0', [[2420, 894, 901], [2473, 882, 890]]],
  // lower pay
  [YELLOW, [[107, 1097, 1112], [262, 990, 1012], [368, 994, 1016], [527, 984, 1022], [632, 1002, 1040], [738, 960, 1002], [843, 955, 1006], [948, 982, 1012], [1053, 992, 1010]]],
  [LIME, [[422, 1000, 1010], [527, 985, 998], [632, 1000, 1016], [738, 958, 974], [843, 950, 966]]],
  [GOLD, [[1106, 1005, 1016], [1211, 1020, 1032], [1317, 1040, 1050], [1369, 1048, 1056]]],
  [YELLOW, [[1317, 1010, 1022], [1421, 1024, 1036], [1473, 1012, 1026], [1527, 974, 992], [1631, 1006, 1026]]],
  ['#3ee018', [[1106, 1048, 1056], [1158, 1048, 1074], [1263, 1070, 1100], [1369, 1100, 1124], [1421, 1108, 1130], [1473, 1104, 1120]]],
  ['#8fc030', [[1473, 1102, 1118], [1527, 1082, 1104], [1579, 1090, 1100]]],
  [NAVY, [[107, 1220, 1225], [158, 1199, 1204]]],
  [NAVY, [[422, 1115, 1120], [475, 1103, 1114], [527, 1096, 1100], [632, 1114, 1118], [738, 1074, 1079], [790, 1068, 1073]]],
  [NAVY, [[527, 1117, 1126], [632, 1138, 1146], [738, 1096, 1106], [790, 1090, 1106]]],
  [NAVY, [[632, 1063, 1068], [685, 1047, 1052]]],
  [NAVY, [[738, 1022, 1027], [790, 1014, 1019]]],
  [TAN, [[790, 1106, 1134], [843, 1104, 1126], [896, 1112, 1132]]],
  [TAN, [[896, 1116, 1121], [948, 1133, 1138]]],
  [NAVY, [[1263, 1028, 1033], [1317, 1040, 1045]]],
  [NAVY, [[1369, 1054, 1060], [1421, 1056, 1062], [1473, 1050, 1055]]],
  ['#3c1030', [[1579, 1096, 1102], [1631, 1126, 1132], [1684, 1128, 1134], [1737, 1106, 1112], [1896, 1120, 1126]]],
  ['#1a10a0', [[1896, 1120, 1134], [1998, 1096, 1110]]],
  [TEAL, [[1998, 1090, 1100], [2051, 1076, 1084], [2103, 1050, 1066]]],
  ['#a8b838', [[2103, 995, 1008], [2156, 975, 992]]],
  ['#4fc880', [[2157, 946, 965], [2209, 935, 950]]],
  ['#30e418', [[2103, 1042, 1064], [2156, 1010, 1048], [2209, 990, 1028], [2315, 966, 1000], [2368, 934, 970], [2420, 908, 932]]],
  [YELLOW, [[2156, 990, 1012], [2209, 972, 992], [2315, 955, 966], [2368, 926, 934]]],
  ['#37b0a0', [[2420, 926, 932], [2523, 906, 912]]],
  ['#45d070', [[1473, 1229, 1234], [1526, 1212, 1218], [1527, 1213, 1225], [1579, 1222, 1236], [1631, 1258, 1272], [1684, 1264, 1278], [1737, 1242, 1258], [1896, 1267, 1280], [1998, 1244, 1258], [2051, 1233, 1240]]],
];

// Fine lamination inside the pay zones.
const STREAK_COLORS = ['#ff8a00', '#ffc21c', '#f69410', '#ffcc30', '#ff9a10'];
const laminate = (keys, count, seed) => Array.from({ length: count }, (_, i) => {
  const noise = (k) => {
    const n = Math.sin((i + 1) * 12.9898 + k * 78.233 + seed) * 43758.5453;
    return n - Math.floor(n);
  };
  const first = keys[0][0];
  const last = keys[keys.length - 1][0];
  const x1 = first + Math.floor((noise(1) * (last - first - 60)) / 53) * 53;
  const x2 = Math.min(last, x1 + 53 * (2 + Math.floor(noise(2) * 7)));
  const from = 0.06 + noise(3) * 0.86;
  return {
    points: ribbon(keys, from, from + 0.02 + noise(4) * 0.04, x1, x2),
    color: STREAK_COLORS[Math.floor(noise(5) * STREAK_COLORS.length)],
  };
});

const STREAKS = [
  ...laminate(UPPER, 70, 1),
  ...laminate(MIDDLE, 10, 2),
  ...laminate(EAST, 150, 3),
  ...laminate(NORTH_EAST, 16, 4),
  ...laminate(LOWER, 90, 5),
];

const X_TICKS = [[529, 5000], [705, 10000], [880, 15000], [1055, 20000], [1230, 25000], [1406, 30000], [1581, 35000], [1756, 40000]];
const Y_TICKS = [[470, 1650], [560, 1700], [651, 1750], [741, 1800], [831, 1850]];

const Bands = ({ rows }) => rows.map(([color, keys], i) => (
  <polygon key={i} points={ribbon(keys)} fill={color} />
));

const CrossSection = () => (
  <svg viewBox="297 349 1580 563" fontFamily="'Liberation Sans', sans-serif" fontSize="13" fill="#222">
    <rect x="1820" y="393" width="54" height="516" fill="#f2f2f2" />
    <g transform="translate(340 370) scale(.333333)" shapeRendering="crispEdges">
      <Bands rows={LAYERS} />
      {PAY_ZONES.map(([, keys], i) => (
        <polygon key={i} points={ribbon(keys, -0.015, 1.015)} fill="#20206a" />
      ))}
      <Bands rows={PAY_ZONES} />
      <Bands rows={SHADES} />
      {STREAKS.map((streak, i) => (
        <polygon key={i} points={streak.points} fill={streak.color} opacity=".45" />
      ))}
      <Bands rows={DETAILS} />
    </g>
    <g stroke="#a9a9a9" strokeDasharray="1 2" opacity=".8">
      {X_TICKS.map(([x]) => <path key={x} d={`M${x}.5 393v515`} />)}
      {Y_TICKS.map(([y]) => <path key={y} d={`M354 ${y}.5h1465`} />)}
    </g>
    <g stroke="#999">
      {X_TICKS.map(([x]) => <path key={x} d={`M${x}.5 391v5`} />)}
      {Y_TICKS.map(([y]) => <path key={y} d={`M354 ${y}.5h8`} />)}
    </g>
    <rect x="354.500" y="393.500" width="1465" height="515" fill="none" stroke="#9c9c9c" />
    <path d="M721 394v139" stroke="#7f7a2e" strokeWidth="2" />
    <path d="M721 533l53 100 76 45 77 29 87 3 43-6" fill="none" stroke="#ece6cf" strokeWidth="2.500" />
    <path d="M721 533l53 100 76 45 77 29 87 3 43-6" fill="none" stroke="#26241c" />
    <circle cx="1057" cy="704" r="2" fill="#111" />
    <text x="1062" y="700" fontSize="12" fill="#0b1236">101</text>
    <g textAnchor="middle">
      <text x="1087" y="363">L, м</text>
      {X_TICKS.map(([x, value]) => <text key={x} x={x} y="380" fontSize="12">{value}</text>)}
      <text transform="translate(313 651) rotate(-90)">Z, м</text>
      <text transform="translate(1871 651) rotate(-90)">Z, м</text>
    </g>
    {Y_TICKS.map(([y, value]) => (
      <g key={y} fontSize="12">
        <text x="350" y={y + 4} textAnchor="end">{value}</text>
        <text x="1823" y={y + 4}>{value}</text>
      </g>
    ))}
  </svg>
);

/* ---------- data ---------- */

const MENU = ['Проект', 'Вид', 'Настройки', 'Файлы', 'Менеджер проектов', 'Отчёты', 'Помощь'];

const filter = (name, color) => ({ name, level: 1, icon: <DerrickIcon color={color} funnel /> });
const marker = (name, color) => ({ name, level: 1, fold: 'right', icon: <MarkerIcon color={color} /> });
const curve = (name, color, rest) => ({ name, level: 1, icon: <LogIcon color={color} {...rest} />, selected: name === 'Phit_0' });

const TREE = [
  { name: 'Скважины', fold: 'right', control: 'none', icon: <DerrickIcon /> },
  { name: 'Фильтры по скважинам', fold: 'down', icon: <DerrickIcon funnel /> },
  filter('WellFilter1 (10)', '#a6f075'),
  filter('15 (9)', '#eb98dc'),
  filter('22 (1)', '#6cabe6'),
  filter('1000', '#dcf07c'),
  { name: 'Маркеры', fold: 'down', icon: <MarkerIcon /> },
  marker('Top1', '#e0ab88'),
  marker('Top2', '#3232b4'),
  marker('Top3', '#b4703c'),
  marker('Top4', '#dcae3c'),
  marker('Top5', '#6cc848'),
  marker('OWC', '#8888a0'),
  { name: 'Атрибуты скважин', fold: 'right', control: 'radio', icon: <AttributeIcon /> },
  { name: 'Кривые ГИС', fold: 'down', icon: <CurvesIcon /> },
  curve('GK', '#f01010'),
  curve('NGK', '#ccd650'),
  curve('GZ3', '#d6a8b4'),
  curve('PS', '#84e478'),
  curve('IK', '#f0f484'),
  curve('Phit', '#80f08c'),
  curve('Phit_0', '#fbfb90'),
  curve('Soil', '#be6c30'),
  curve('Perm', '#2078c4'),
  curve('Litho', '#f8f878', { steps: true }),
  curve('Fluid', '#84d8f8'),
  curve('Sonic', '#f8c478'),
  curve('H', '#407460'),
  curve('Sw', '#c8c8c8'),
  curve('WellLog1', '#90f894'),
  { name: 'Комментарии ГИС', fold: 'right', control: 'none', icon: <CommentIcon /> },
  { name: 'Сечения', fold: 'down', control: 'radio', checked: true, icon: <SectionIcon /> },
  { name: 'Cross-Section1', level: 1, control: 'radio', icon: <SectionIcon color="#58cc30" /> },
];

const WELLS = [
  [19, '21', '483491.18', '7877583.38', '-30.8'],
  [20, '22', '465120.97', '7875617.24', '-41.6'],
  [21, '24', '490857.4684', '7878672.1341', '-7.8'],
  [22, '25', '496350.7206', '7881302.8505', '-61.6'],
  [23, '26', '470748.03', '7874230.63', '-20.8'],
  [24, '27', '489957', '7889822', '-96.4'],
  [25, '28', '486361.6', '7888181.6', '-86.4'],
  [26, '29', '478729', '7880044.6', '-51.8'],
  [27, '101', '472547.84375', '7869481', '0'],
];

const TRAJECTORY = [
  ['0', '472547.84375', '7869481', '0', '0', '0'],
  ['1685.031006', '472547.84375', '7869481', '1685.031006', '0', '0'],
  ['3199.417455', '473615.0625', '7870554', '1740.54187', '87.899314', '44.845231'],
  ['5255.365634', '475064.90625', '7872011.5', '1764.411621', '89.334776', '44.849117'],
  ['7568.070211', '476695.96875', '7873651', '1781.064941', '89.587421', '44.852187'],
  ['10052.056883', '478447.84375', '7875412', '1782.730225', '89.961588', '44.85117'],
  ['11279.866913', '479313.71875', '7876282.5', '1779.954712', '90.129519', '44.847388'],
];

const Scroll = ({ size, end }) => (
  <ScrollTrack>
    <ChevronIcon dir="up" />
    <ScrollThumb $size={size} $end={end} />
    <ChevronIcon dir="down" />
  </ScrollTrack>
);

const Tree = () => (
  <TreeBox>
    <TreeList>
      {TREE.map((item) => (
        <TreeRow key={item.name} $level={item.level} $selected={item.selected}>
          <Chevron>
            {item.fold && <ChevronIcon dir={item.fold} color={item.fold === 'right' ? '#a5a5a5' : '#444'} />}
          </Chevron>
          <label>
            {item.control === 'none' ? <CheckSpace /> : (
              <Check type={item.control || 'checkbox'} name={item.name} defaultChecked={item.checked} />
            )}
            {item.icon}
            {item.name}
          </label>
        </TreeRow>
      ))}
    </TreeList>
    <Scroll size={207} />
  </TreeBox>
);

const SpinBox = ({ label }) => (
  <Spin>
    <input aria-label={label} defaultValue="0" disabled />
    <svg width="7" height="12" viewBox="0 0 7 12">
      <path d="M0 4l3.500-4L7 4zM0 8l3.500 4L7 8z" fill="#666" />
    </svg>
  </Spin>
);

const WellTable = () => (
  <DataTable $width={636}>
    <colgroup>
      <col width="34" />
      <col width="100" />
      <col width="101" />
      <col width="100" />
      <col width="101" />
      <col width="99" />
      <col width="101" />
    </colgroup>
    <thead>
      <tr>
        <th aria-label="№" />
        <th>Имя скважины</th>
        <th>X0, м</th>
        <th>Y0, м</th>
        <th>Z0,</th>
        <th>Траектория</th>
        <th><ClippedHead>Версия траекто..</ClippedHead></th>
      </tr>
    </thead>
    <tbody>
      {WELLS.map(([id, ...cells]) => (
        <tr key={id}>
          <th scope="row">{id === 27 ? <b>{id}</b> : id}</th>
          {cells.map((cell, i) => <td key={i}>{cell}</td>)}
          <ButtonCell>
            <CellButton $active={id === 27}>{'{...}'}</CellButton>
          </ButtonCell>
          {id === 27 ? (
            <CurrentCell>
              3 (3)
              <Pointer width="13" height="20" viewBox="0 0 13 20">
                <path d="M1 1v15l3-3 3 6 2-1-3-6h5z" fill="#fff" stroke="#222" />
              </Pointer>
            </CurrentCell>
          ) : <td>default</td>}
        </tr>
      ))}
    </tbody>
  </DataTable>
);

const TrajectoryTable = () => (
  <DataTable $width={617}>
    <colgroup>
      <col width="16" />
      {[0, 1, 2, 3, 4].map((i) => <col key={i} width="100" />)}
      <col width="101" />
    </colgroup>
    <thead>
      <tr>
        <th aria-label="№" />
        <th colSpan="6">Trajectories, Скважина 101</th>
      </tr>
      <tr>
        <th aria-label="№" />
        <th>Глубина, м</th>
        <th>X, м</th>
        <th>Y, м</th>
        <th>Z,</th>
        <th>Угол, град.</th>
        <th>Азимут, град.</th>
      </tr>
    </thead>
    <tbody>
      {TRAJECTORY.map((cells, row) => (
        <tr key={row}>
          <th scope="row">{row + 1}</th>
          {cells.map((cell, i) => (i > 3
            ? <ReadOnlyCell key={i}>{cell}</ReadOnlyCell>
            : <td key={i}>{cell}</td>))}
        </tr>
      ))}
      <tr>
        <th aria-label="№" />
        <HintCell>Пишите или ...</HintCell>
        <td />
        <td />
        <td />
        <td />
        <td />
      </tr>
    </tbody>
  </DataTable>
);

const AppToolbar = () => (
  <Toolbar>
    <ToolButton aria-label="Сохранить"><SaveIcon /></ToolButton>
    <Separator />
    <ToolButton aria-label="Схема"><FlowIcon /></ToolButton>
    <Separator />
    <ToolButton aria-label="Мастер"><WandIcon /></ToolButton>
    <Separator />
    <ToolButton aria-label="Запуск"><PowerIcon /></ToolButton>
    <ToolButton $wide aria-label="Пауза">
      <svg width="14" height="15" viewBox="0 0 14 15"><path d="M0 0h5v15H0zM8 0h5v15H8z" fill="#777" /></svg>
    </ToolButton>
    <ToolButton aria-label="Стоп">
      <svg width="16" height="16" viewBox="0 0 16 16"><path d="M1 1l14 14M15 1L1 15" stroke="#555" strokeWidth="3" /></svg>
    </ToolButton>
    <Separator />
    <StepLabel>
      <Check type="checkbox" disabled />
      Рассчитать до шага:
    </StepLabel>
    <SpinBox label="Шаг" />
    <SpinBox label="Подшаг" />
    <Combo aria-label="Единица" disabled />
    <ToolButton aria-label="Расписание"><ClockIcon /></ToolButton>
    <StepSlider type="range" aria-label="Временной шаг" defaultValue="0" />
  </Toolbar>
);

function App() {
  return (
    <>
      <GlobalStyle />
      <MenuBar>
        {MENU.map((item) => <a key={item} href="#menu">{item}</a>)}
      </MenuBar>
      <AppToolbar />
      <Workspace>
        <ModeStrip>
          <ModeButton $active aria-label="Дерево"><TreeModeIcon /></ModeButton>
          <ModeButton aria-label="Параметры"><GearIcon /></ModeButton>
          <ModeButton aria-label="Инструменты"><HammerIcon /></ModeButton>
        </ModeStrip>
        <Sidebar>
          <SectionButton>Варианты моделей</SectionButton>
          <SectionButton>Геометрические объекты</SectionButton>
          <SearchRow>
            <SearchIcon />
            <input type="search" aria-label="Поиск" />
            <SquareButton aria-label="Сортировка"><SortIcon /></SquareButton>
            <SquareButton $width={33} aria-label="Фильтр">
              <FunnelIcon />
              <svg width="8" height="5" viewBox="0 0 8 5"><path d="M0 0h8L4 5z" fill="#111" /></svg>
            </SquareButton>
          </SearchRow>
          <Tree />
          <TreeActions>
            <SquareButton disabled aria-label="Добавить">
              <svg width="13" height="13" viewBox="0 0 14 14"><path d="M7 0v14M0 7h14" stroke="#999" strokeWidth="3" /></svg>
            </SquareButton>
            <SquareButton aria-label="Переименовать">
              <svg width="17" height="14" viewBox="0 0 17 14"><path d="M0 2h10M5 2v11M12 1h4M12 13h4M14 1v12" stroke="#111" strokeWidth="1.800" /></svg>
            </SquareButton>
            <SquareButton aria-label="Удалить">
              <svg width="12" height="12" viewBox="0 0 12 12"><path d="M1 1l10 10M11 1L1 11" stroke="#cc2222" strokeWidth="2.400" /></svg>
            </SquareButton>
            <SquareButton aria-label="Настроить"><WrenchIcon /></SquareButton>
          </TreeActions>
          <SectionButton>Свойства флюидов</SectionButton>
          <SectionButton>Данные скважины</SectionButton>
          <SectionButton>Анализ данных</SectionButton>
          <SectionButton>Графики</SectionButton>
        </Sidebar>
        <Main>
          <TabBar>
            <Tab $open>Таблица скважин</Tab>
            <AddTab aria-label="Добавить таблицу"><PlusIcon /></AddTab>
          </TabBar>
          <TablesPanel>
            <TableFrame $grow>
              <WellTable />
              <Scroll size={64} end />
            </TableFrame>
            <TableFrame>
              <TrajectoryTable />
              <Scroll size={170} />
            </TableFrame>
          </TablesPanel>
          <TabBar>
            <Tab>2D</Tab>
            <Tab>3D</Tab>
            <Tab>Диаграмма скважин</Tab>
            <Tab>Гистограмма</Tab>
            <Tab>Кроссплот</Tab>
            <Tab $accent>Сечения</Tab>
            <AddTab aria-label="Добавить вид"><PlusIcon /></AddTab>
          </TabBar>
          <ChartPanel>
            <CrossSection />
            <ScaleLine>Масштаб по Z: 51.4357</ScaleLine>
          </ChartPanel>
        </Main>
        <ViewStrip>
          {VIEW_ICONS.map(([name, icon]) => (
            <ViewButton key={name} aria-label={name}>{icon}</ViewButton>
          ))}
        </ViewStrip>
      </Workspace>
      <StatusBar>
        <Progress>100%</Progress>
        <StatusText>Расчёт блоков пересечения со скважинами: <b>Готово</b></StatusText>
        <LastOnly>
          <Check type="checkbox" />
          Только последние сообщения
        </LastOnly>
        <CountButton><InfoIcon size={16} />655</CountButton>
        <CountButton>
          <svg width="17" height="16" viewBox="0 0 17 16">
            <path d="M7 1l7 12H0z" fill="#f2e53a" stroke="#222" />
            <path d="M7 5v4M7 10v2" stroke="#111" strokeWidth="1.500" />
            <circle cx="13" cy="12" r="3.500" fill="#d23a1e" />
          </svg>
          12
        </CountButton>
        <CountButton $alert>
          <svg width="14" height="14" viewBox="0 0 14 14">
            <circle cx="7" cy="7" r="6.500" fill="#cf2a22" />
            <path d="M7 3v5M7 9v2" stroke="#fff" strokeWidth="1.800" />
          </svg>
          10
        </CountButton>
      </StatusBar>
      <SlideFooter>
        <Logo>
          <LogoMark>t</LogoMark>
          <LogoName>Navigator</LogoName>
          <LogoSign>®</LogoSign>
          <LogoTag>
            {['#c23a3a', '#d9903c', '#5aa84e', '#3f86bd'].map((color) => <Swatch key={color} $color={color} />)}
            Rock Flow Dynamics
          </LogoTag>
        </Logo>
        <SlideNumber>14</SlideNumber>
      </SlideFooter>
    </>
  );
}

export default App;
